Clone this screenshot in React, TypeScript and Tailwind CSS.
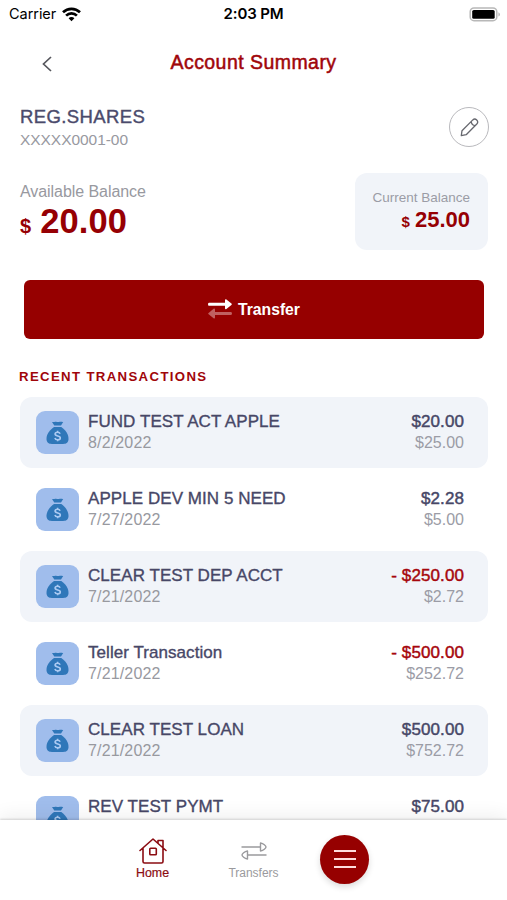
import { ReactNode } from "react";

type Transaction = {
  title: string;
  date?: string;
  amount: string;
  balance?: string;
  debit?: boolean;
};

const transactions: Transaction[] = [
  { title: "FUND TEST ACT APPLE", date: "8/2/2022", amount: "$20.00", balance: "$25.00" },
  { title: "APPLE DEV MIN 5 NEED", date: "7/27/2022", amount: "$2.28", balance: "$5.00" },
  { title: "CLEAR TEST DEP ACCT", date: "7/21/2022", amount: "- $250.00", balance: "$2.72", debit: true },
  { title: "Teller Transaction", date: "7/21/2022", amount: "- $500.00", balance: "$252.72", debit: true },
  { title: "CLEAR TEST LOAN", date: "7/21/2022", amount: "$500.00", balance: "$752.72" },
  { title: "REV TEST PYMT", amount: "$75.00" },
];

function WifiIcon() {
  return (
    <svg width="19" height="15" viewBox="0 0 19 15" fill="none" stroke="#000" strokeWidth="2.7">
      <path d="M1 5.3C5.8.7 13.2.7 18 5.3" />
      <path d="M4.1 8.6c3.1-3 7.7-3 10.8 0" />
      <path d="M9.5 14.2 6.6 11.2c1.6-1.6 4.2-1.6 5.8 0Z" fill="#000" stroke="none" />
    </svg>
  );
}

function BatteryIcon() {
  return (
    <svg width="32" height="15" viewBox="0 0 32 15" fill="none">
      <rect x="1.2" y="0.9" width="26.600" height="12.800" rx="3.800" stroke="#b8b8b8" strokeWidth="1.500" />
      <rect x="3.200" y="2.900" width="22.500" height="8.900" rx="1.600" fill="#000" />
      <path d="M29.500 5.200c1.800.7 1.800 3.700 0 4.400Z" fill="#aaa" />
    </svg>
  );
}

function StatusBar() {
  return (
    <div className="grid h-7 grid-cols-3 items-center pr-[6px] pl-[9px] font-['Inter',sans-serif] text-[14.5px] text-black">
      <div className="flex items-center gap-[6px]">
        <span className="tracking-[-0.050px]">Carrier</span>
        <WifiIcon />
      </div>
      <div className="pr-[3px] text-center text-[15px] font-semibold tracking-[-0.150px]">2:03 PM</div>
      <div className="flex justify-end">
        <BatteryIcon />
      </div>
    </div>
  );
}

function MoneyBag() {
  return (
    <div className="flex size-[43px] shrink-0 items-center justify-center rounded-[9px] bg-[#a0bdec]">
      <svg width="23" height="24" viewBox="0 0 23 24">
        <path d="M6 .9c1.4.5 2.6-.4 4-.1 1.4.3 2.400.4 3.800 0 1.100-.3 2.200.2 3.400.1L15 4.500H8.300Z" fill="#2f77b9" />
        <path d="M8 6.100h7.300c4.200 3.200 7.200 7 7.200 11.700 0 3.500-2 5.200-5.400 5.200H5.900C2.500 23 .5 21.300.5 17.800.5 13.100 3.800 9.300 8 6.100Z" fill="#2f77b9" />
        <path d="M14.100 12.700c-.4-1-1.300-1.500-2.500-1.500-1.500 0-2.500.7-2.500 1.800 0 2.600 5.200 1.200 5.200 3.900 0 1.200-1.100 1.900-2.600 1.900-1.500 0-2.500-.6-2.800-1.800M11.600 9.800v1.400M11.600 18.800v1.400" fill="none" stroke="#abcaf2" strokeWidth="1.600" />
      </svg>
    </div>
  );
}

function TransactionRow({ item, shaded }: { item: Transaction; shaded: boolean }) {
  return (
    <div className={`flex h-[71px] shrink-0 items-center rounded-[12px] pr-6 pl-4 ${shaded ? "bg-[#f1f4f9]" : ""}`}>
      <MoneyBag />
      <div className="ml-[9px] flex-1 pb-[2px]">
        <div className="text-[17px] leading-[21px] tracking-[0.060px] text-[#474767] [-webkit-text-stroke:0.35px]">{item.title}</div>
        <div className="h-[21px] text-[16px] leading-[21px] tracking-[0.150px] text-[#98999f]">{item.date}</div>
      </div>
      <div className="pb-[2px] text-right">
        <div className={`text-[17px] leading-[21px] tracking-[0.100px] [-webkit-text-stroke:0.450px] ${item.debit ? "text-[#a6060c]" : "text-[#474767]"}`}>
          {item.amount}
        </div>
        <div className="h-[21px] text-[16px] leading-[21px] text-[#9b9ca6]">{item.balance}</div>
      </div>
    </div>
  );
}

function TabItem({ label, className, children }: { label: string; className: string; children: ReactNode }) {
  return (
    <div className={`flex flex-col items-center ${className}`}>
      <div className="flex h-[27px] items-center justify-center">{children}</div>
      <span className="mt-[2px] leading-[14px]">{label}</span>
    </div>
  );
}

export default function App() {
  return (
    <div className="flex h-[900px] w-[507px] flex-col overflow-hidden bg-white font-['Liberation_Sans',Arial,sans-serif]">
      <StatusBar />

      <header className="grid h-[72px] shrink-0 grid-cols-[60px_1fr_60px] items-center pb-px">
        <svg width="10" height="16" viewBox="0 0 10 16" fill="none" stroke="#55565c" strokeWidth="1.700" className="ml-[42px]">
          <path d="M9 1 1.500 8 9 15" />
        </svg>
        <h1 className="pb-[2px] text-center text-[19.500px] tracking-[0.450px] text-[#a0050a] [-webkit-text-stroke:0.500px]">Account Summary</h1>
      </header>

      <section className="flex h-[73px] shrink-0 justify-between pr-[18px] pl-5">
        <div className="pt-[5px]">
          <div className="text-[18.500px] leading-6 tracking-[0.400px] text-[#4b4b6c] [-webkit-text-stroke:0.400px]">REG.SHARES</div>
          <div className="text-[15.500px] leading-[22px] tracking-[-0.050px] text-[#98999f]">XXXXX0001-00</div>
        </div>
        <div className="mt-[7px] flex size-10 items-center justify-center rounded-full border-[1.500px] border-[#b9b9bd]">
          <svg width="19" height="19" viewBox="0 0 19 19" fill="none" stroke="#66676e" strokeWidth="1.300" strokeLinejoin="round">
            <path d="M1.300 17.700 2 12.700 12.800 1.900c2.600-2.400 6.500 1.400 4 4.100L6.200 16.700ZM11.100 3.600c.4 2.300 1.800 3.700 4.100 4.100" />
          </svg>
        </div>
      </section>

      <section className="flex h-[107px] shrink-0 justify-between pr-[19px] pl-5">
        <div className="pt-[9px]">
          <div className="text-[16px] leading-5 tracking-[-0.060px] text-[#98999f]">Available Balance</div>
          <div className="-mt-px flex items-baseline gap-[9px] font-bold text-[#960004]">
            <span className="text-[20px]">$</span>
            <span className="text-[34.500px] leading-[40px] tracking-[0.100px]">20.00</span>
          </div>
        </div>
        <div className="flex h-[77px] w-[133px] flex-col items-end rounded-[12px] bg-[#f1f4f9] pt-[17px] pr-[18px]">
          <div className="text-[13.500px] leading-4 text-[#9b9ca6]">Current Balance</div>
          <div className="flex items-baseline gap-[5px] font-bold text-[#960004]">
            <span className="text-[15px]">$</span>
            <span className="text-[22px] leading-[27px]">25.00</span>
          </div>
        </div>
      </section>

      <button className="mr-[23px] ml-6 flex h-[59px] shrink-0 items-center justify-center gap-[6px] rounded-[6px] bg-[#960000] text-[15.700px] font-bold text-white">
        <svg width="24" height="20" viewBox="0 0 24 20" fill="none" className="mb-[2px]">
          <path d="M1 3.700h16V1.200c0-1 .7-1.200 1.400-.7l5 4.100c.6.5.6.9 0 1.400l-5 4c-.7.5-1.400.3-1.400-.7V6.800H1C-.3 6.800-.3 3.700 1 3.700Z" fill="#fff" />
          <path d="M23 13h-16v-2.500c0-1-.7-1.200-1.400-.7l-5 4.100c-.6.5-.6.9 0 1.400l5 4c.7.5 1.400.3 1.400-.7V16h16c1.300 0 1.300-3 0-3Z" fill="#c06060" />
        </svg>
        Transfer
      </button>

      <h2 className="h-[58px] shrink-0 pt-[28px] pl-[19px] text-[13.200px] leading-[19px] font-bold tracking-[1.360px] text-[#a0050a]">
        RECENT TRANSACTIONS
      </h2>

      <main className="flex min-h-0 flex-1 flex-col gap-[6px] overflow-hidden pr-[19px] pl-5">
        {transactions.map((item, i) => (
          <TransactionRow key={item.title} item={item} shaded={i % 2 === 0} />
        ))}
      </main>

      <nav className="relative flex h-20 shrink-0 items-start bg-white pl-[102px] shadow-[0_-1px_2px_rgba(0,0,0,0.15),0_-4px_18px_rgba(0,0,0,0.07)]">
        <TabItem label="Home" className="w-[101px] pt-[17px] text-[12.400px] text-[#8b0c12] [-webkit-text-stroke:0.200px]">
          <svg width="28" height="26" viewBox="0 0 28 26" fill="none" stroke="#8b0c12" strokeWidth="1.600" strokeLinejoin="round" strokeLinecap="round">
            <path d="M1 12.500 14 1l13 11.500M4 10v13.500c0 .8.500 1.500 1.500 1.500h17c1 0 1.500-.7 1.500-1.500V10M19 5.300V2.500H24v7.300" />
            <rect x="10.800" y="10.300" width="6.500" height="6.500" rx="0.800" />
          </svg>
        </TabItem>
        <TabItem label="Transfers" className="w-[101px] pt-[17px] text-[12px] text-[#9a9a9d]">
          <svg width="26" height="20" viewBox="0 0 26 20" fill="none" stroke="#9a9a9d" strokeWidth="1.400" strokeLinejoin="round">
            <path d="M.5 6h19M19.500 2v8c3-.5 5.500-2.800 5.500-4s-2.500-3.500-5.500-4ZM25.500 14h-19M6.500 10v8C3.500 17.500 1 15.200 1 14s2.500-3.500 5.500-4Z" />
          </svg>
        </TabItem>
        <button className="mt-[15px] ml-4 flex size-[49px] flex-col items-center justify-center gap-[6px] rounded-full bg-[#960000] pb-px shadow-[0_3px_6px_rgba(0,0,0,0.14)]">
          <span className="h-[2px] w-[22px] bg-[#ffdcdc]" />
          <span className="h-[2px] w-[22px] bg-[#ffdcdc]" />
          <span className="h-[2px] w-[22px] bg-[#ffdcdc]" />
        </button>
      </nav>
    </div>
  );
}
